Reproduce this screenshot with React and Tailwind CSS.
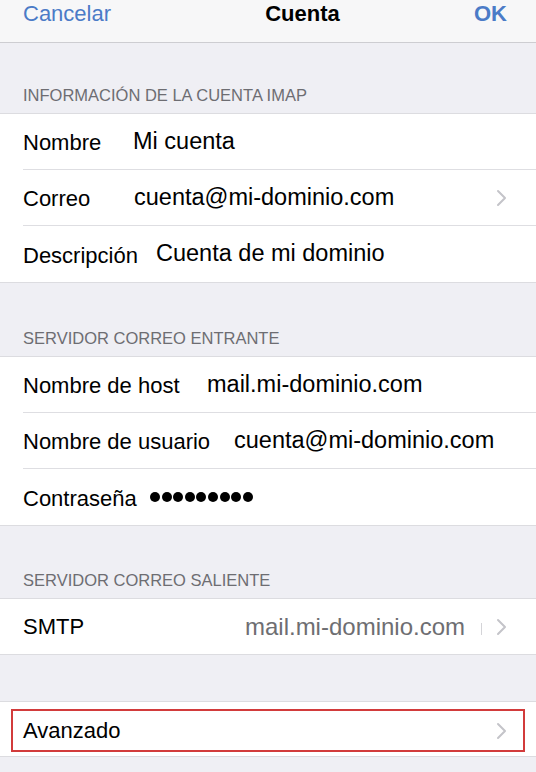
import React from 'react';

const font = { fontFamily: '"Liberation Sans", Arial, sans-serif' };

function Chevron() {
  return (
    <svg width="11" height="18" viewBox="0 0 11 18" fill="none" className="shrink-0">
      <path d="M2 2l7 7-7 7" stroke="#c4c4c9" strokeWidth="2" strokeLinecap="round" strokeLinejoin="round" />
    </svg>
  );
}

function SectionHeader({ children, height = 'h-[73px]' }) {
  return (
    <div className={`${height} flex items-end px-[23px] pb-[8px]`}>
      <span className="text-[16.5px] leading-[20px] text-[#6d6d72] uppercase">{children}</span>
    </div>
  );
}

function Row({ label, labelW, value, chevron, last }) {
  return (
    <div className="pl-[23px]">
      <div className={`h-[56px] flex items-center pr-[29px] ${last ? '' : 'border-b border-[#dedee2]'}`}>
        <span className={`${labelW} shrink-0 text-[22px] text-black whitespace-nowrap pt-[2px]`}>{label}</span>
        <span className="flex-1 text-[23.5px] text-black whitespace-nowrap">{value}</span>
        {chevron && <Chevron />}
      </div>
    </div>
  );
}

export default function App() {
  return (
    <div className="w-[536px] h-[772px] overflow-hidden bg-[#efeff4]" style={font}>
      {/* barra de navegación */}
      <div className="h-[43px] bg-[#f7f7f8] border-b border-[#cdcdd1] flex items-start justify-between px-[23px]">
        <span className="text-[22px] leading-[28px] text-[#4b7bc7]">Cancelar</span>
        <span className="text-[22px] leading-[28px] font-bold text-black ml-[20px]">Cuenta</span>
        <span className="text-[22px] leading-[28px] font-bold text-[#4b7bc7] pr-[6px]">OK</span>
      </div>

      <SectionHeader height="h-[70px]">Información de la cuenta IMAP</SectionHeader>
      <div className="bg-white border-y border-[#dcdce0]">
        <Row label="Nombre" labelW="w-[110px]" value="Mi cuenta" />
        <Row label="Correo" labelW="w-[111px]" value="cuenta@mi-dominio.com" chevron />
        <Row label="Descripción" labelW="w-[133px]" value="Cuenta de mi dominio" last />
      </div>

      <SectionHeader>Servidor correo entrante</SectionHeader>
      <div className="bg-white border-y border-[#dcdce0]">
        <Row label="Nombre de host" labelW="w-[184px]" value="mail.mi-dominio.com" />
        <Row label="Nombre de usuario" labelW="w-[211px]" value="cuenta@mi-dominio.com" />
        <div className="pl-[23px]">
          <div className="h-[56px] flex items-center pr-[29px]">
            <span className="w-[127px] shrink-0 text-[22px] text-black pt-[2px]">Contraseña</span>
            <span className="flex gap-[1.6px]">
              {Array.from({ length: 9 }).map((_, i) => (
                <span key={i} className="w-[10px] h-[10px] rounded-full bg-black" />
              ))}
            </span>
          </div>
        </div>
      </div>

      <SectionHeader height="h-[72px]">Servidor correo saliente</SectionHeader>
      <div className="bg-white border-y border-[#dcdce0]">
        <div className="h-[55px] flex items-center pl-[23px] pr-[29px]">
          <span className="flex-1 text-[22px] text-black">SMTP</span>
          <span className="text-[24px] text-[#6e6e72] whitespace-nowrap">mail.mi-dominio.com</span>
          <span className="w-px h-[12px] bg-[#d4d4d8] ml-[16px] mr-[14px] mt-[4px]" />
          <Chevron />
        </div>
      </div>

      <div className="h-[46px]" />
      <div className="bg-white border-y border-[#dcdce0] h-[56px] pt-[7px] px-[11px]">
        <div className="h-[43px] border-2 border-[#d23b3b] flex items-center pl-[10px] pr-[16px]">
          <span className="flex-1 text-[22px] text-black">Avanzado</span>
          <Chevron />
        </div>
      </div>
    </div>
  );
}
